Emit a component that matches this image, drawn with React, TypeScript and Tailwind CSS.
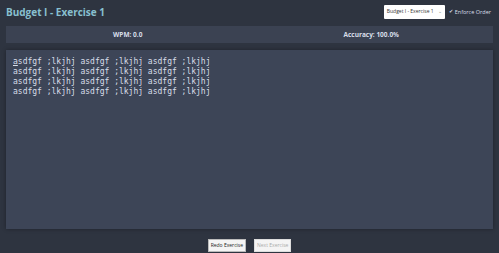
export default function App() {
  const line = 'asdfgf ;lkjhj asdfgf ;lkjhj asdfgf ;lkjhj'
  const lines = [line, line, line, line]

  return (
    <div className="flex h-[253px] w-[499px] flex-col bg-[#2e3440] px-[6px] font-['Open_Sans',sans-serif] text-[#d8dee9]">
      <div className="flex h-[26px] items-start justify-between pt-[5px]">
        <h1 className="text-[10px] leading-[14px] font-bold text-[#88c0d0]">Budget I - Exercise 1</h1>
        <div className="flex items-center gap-[4px] pr-[2px]">
          <div className="flex h-[14px] w-[61px] items-center justify-between rounded-[1px] bg-white px-[3px] text-[5px] text-[#333]">
            <span className="whitespace-nowrap">Budget I - Exercise 1</span>
            <span className="text-[#888]">⌄</span>
          </div>
          <label className="flex items-center gap-[2px] text-[5.5px] text-[#d8dee9]">
            <span className="text-[5px]">✔</span>
            Enforce Order
          </label>
        </div>
      </div>

      <div className="grid h-[17px] grid-cols-2 items-center bg-[#3b4252] text-[6.5px] font-bold">
        <div className="text-center">WPM: 0.0</div>
        <div className="text-center">Accuracy: 100.0%</div>
      </div>

      <div className="mt-[7px] h-[179px] bg-[#3d4557] px-[7px] pt-[7px] font-['DejaVu_Sans_Mono',monospace] text-[8px] leading-[10px] shadow-[0_0_4px_rgba(0,0,0,0.35)]">
        {lines.map((l, i) => (
          <div key={i} className="whitespace-pre">
            {i === 0 ? (
              <>
                <span className="underline">{l[0]}</span>
                {l.slice(1)}
              </>
            ) : (
              l
            )}
          </div>
        ))}
      </div>

      <div className="mt-[10px] flex justify-center gap-[8px]">
        <button className="h-[13px] border border-[#bbb] bg-[#f4f4f4] px-[2px] text-[5px] text-[#222]">
          Redo Exercise
        </button>
        <button disabled className="h-[13px] border border-[#ddd] bg-[#f4f4f4] px-[2px] text-[5px] text-[#aaa]">
          Next Exercise
        </button>
      </div>
    </div>
  )
}
